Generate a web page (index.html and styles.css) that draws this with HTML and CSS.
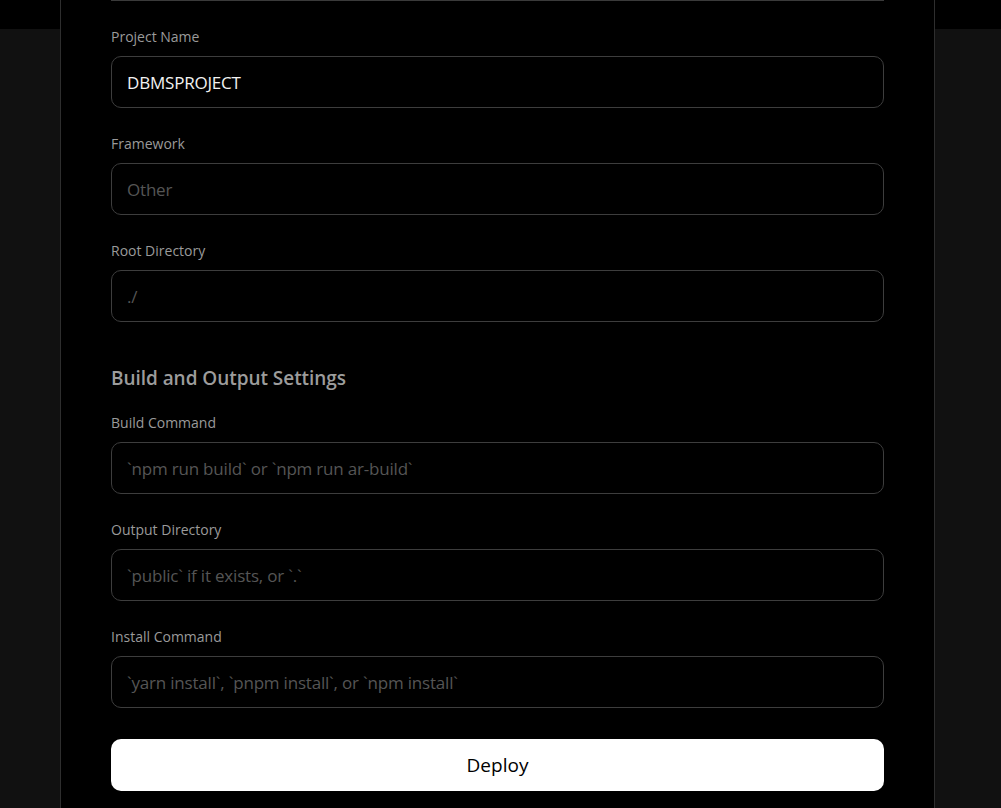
FILE: index.html
```html
<!DOCTYPE html>
<html lang="en">
<head>
<meta charset="utf-8">
<title>Deploy</title>
<link rel="stylesheet" href="styles.css">
</head>
<body>
<header class="topbar"></header>
<main class="page"></main>
<div class="modal">
  <div class="sep"></div>
  <form class="form">
    <div class="field">
      <label class="label">Project Name</label>
      <input class="input" type="text" value="DBMSPROJECT">
    </div>
    <div class="field">
      <label class="label">Framework</label>
      <input class="input" type="text" placeholder="Other">
    </div>
    <div class="field">
      <label class="label">Root Directory</label>
      <input class="input" type="text" placeholder="./">
    </div>
    <h2 class="heading">Build and Output Settings</h2>
    <div class="field">
      <label class="label">Build Command</label>
      <input class="input" type="text" placeholder="`npm run build` or `npm run ar-build`">
    </div>
    <div class="field">
      <label class="label">Output Directory</label>
      <input class="input" type="text" placeholder="`public` if it exists, or `.`">
    </div>
    <div class="field">
      <label class="label">Install Command</label>
      <input class="input" type="text" placeholder="`yarn install`, `pnpm install`, or `npm install`">
    </div>
    <button class="deploy" type="button">Deploy</button>
  </form>
</div>
</body>
</html>
```
FILE: styles.css
```css
html, body {
  margin: 0;
  padding: 0;
  height: 100%;
  background: #111111;
  font-family: "Open Sans", "Noto Sans", sans-serif;
  overflow: hidden;
}
.topbar {
  height: 29px;
  background: #000;
}
.modal {
  position: absolute;
  top: -41px;
  left: 60px;
  width: 773px;
  padding: 0 50px 40px;
  background: #000;
  border: 1px solid #2e2e2e;
}
.sep {
  height: 40px;
  border-bottom: 1px solid #3a3a3a;
}
.form {
  display: flex;
  flex-direction: column;
  padding-top: 25px;
}
.field {
  display: flex;
  flex-direction: column;
  gap: 9px;
  margin-bottom: 25px;
}
.label {
  padding-top: 1px;
  font-size: 14px;
  line-height: 20px;
  color: #9a9a9a;
}
.input {
  box-sizing: border-box;
  height: 52px;
  width: 100%;
  margin: 0;
  padding: 0 15px;
  background: #000;
  border: 1px solid #3d3d3d;
  border-radius: 10px;
  color: #f2f2f2;
  font-family: inherit;
  font-size: 17px;
  letter-spacing: -0.2px;
  outline: none;
}
.input::placeholder {
  color: #555;
}
.heading {
  margin: 18px 0 21px;
  font-size: 19px;
  line-height: 26px;
  font-weight: 600;
  color: #9c9c9c;
  letter-spacing: -0.05px;
}
.deploy {
  margin-top: 6px;
  height: 52px;
  width: 100%;
  border: none;
  border-radius: 10px;
  background: #fff;
  color: #000;
  font-family: inherit;
  font-size: 19px;
  font-weight: 500;
  cursor: pointer;
}
```
